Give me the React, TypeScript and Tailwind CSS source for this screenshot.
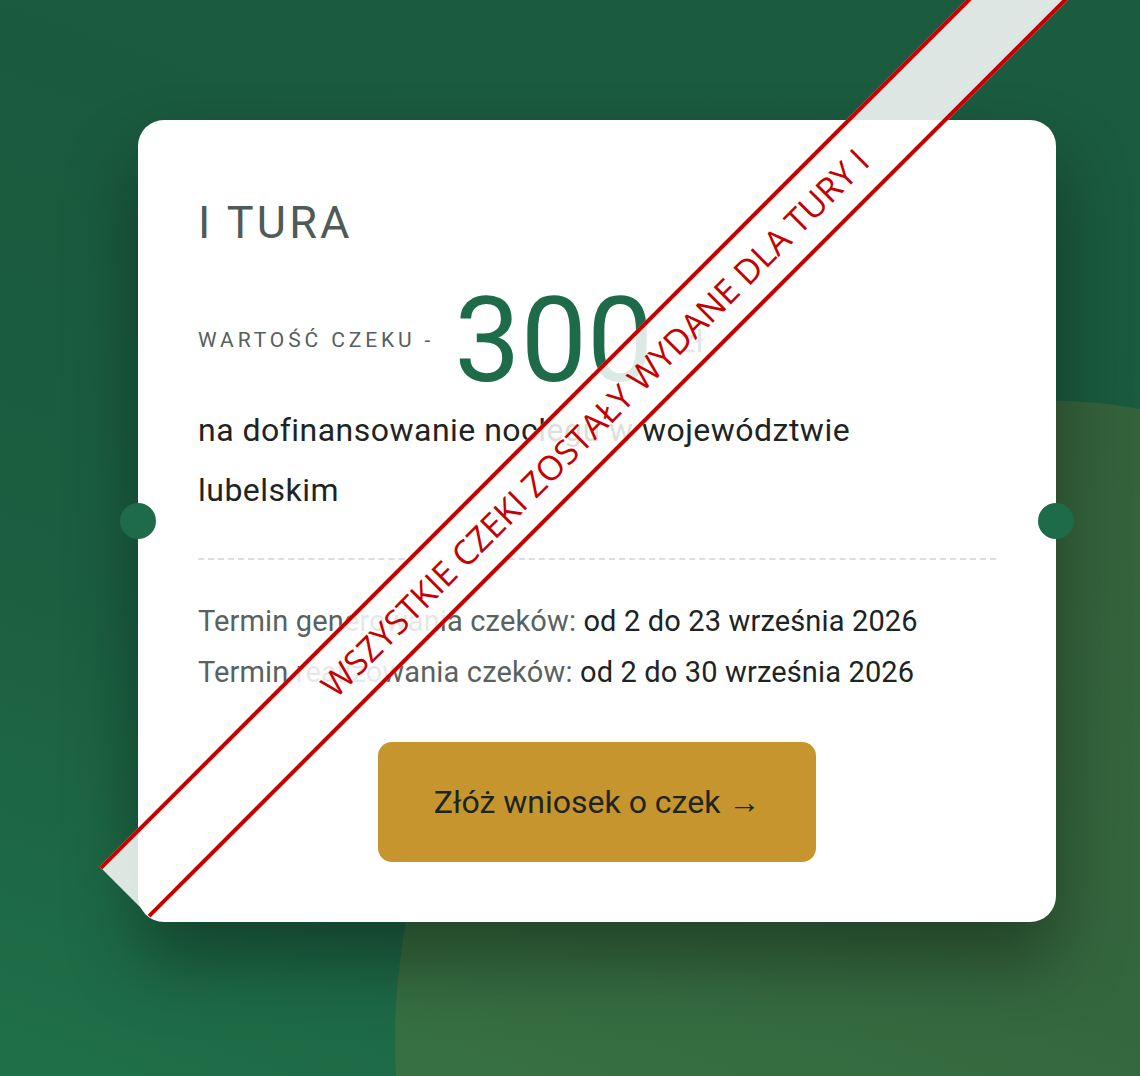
import React from "react";

const sans = { fontFamily: "Roboto, 'Noto Sans', sans-serif" };

function Notch({ side }: { side: "left" | "right" }) {
  return (
    <span
      className={`absolute top-1/2 h-9 w-9 -translate-y-1/2 rounded-full bg-[#1e6b49] ${
        side === "left" ? "-left-[18px]" : "-right-[18px]"
      }`}
    />
  );
}

function Ribbon() {
  return (
    <div className="pointer-events-none absolute left-[125px] top-[856px] z-20 flex h-[72px] w-[1500px] origin-[0_50%] -rotate-45 items-center border-y-4 border-[#c40000] bg-white/85">
      <span
        className="ml-[664px] -translate-x-1/2 whitespace-nowrap text-[34px] leading-none text-[#c40000]"
        style={{ fontFamily: "'Open Sans', sans-serif" }}
      >
        WSZYSTKIE CZEKI ZOSTAŁY WYDANE DLA TURY I
      </span>
    </div>
  );
}

function Term({ label, value }: { label: string; value: string }) {
  return (
    <p>
      <span className="text-[#59625f]">{label} </span>
      <span className="text-[#1d2422]">{value}</span>
    </p>
  );
}

export default function App() {
  return (
    <div
      className="relative h-[1076px] w-full overflow-hidden bg-[linear-gradient(20deg,#1f7049_0%,#1b5e40_35%,#1a5a3e_70%,#1b5b3e_100%)]"
      style={sans}
    >
      {/* soft round glow bottom right */}
      <div className="absolute left-[395px] top-[400px] h-[1280px] w-[1280px] rounded-full bg-[#c7952e]/15" />

      <div className="relative z-10 pl-[138px] pt-[120px]">
        <div className="relative flex w-[918px] flex-col rounded-[26px] bg-white px-[60px] pb-[60px] pt-[80px] shadow-[0_40px_70px_rgba(0,0,0,0.35)]">
          <Notch side="left" />
          <Notch side="right" />

          <h2 className="text-[45px] leading-none tracking-[0.07em] text-[#4e5b57]">I TURA</h2>

          <div className="mt-[37px] flex items-center">
            <span className="text-[21px] tracking-[0.185em] text-[#56605d]">WARTOŚĆ CZEKU -</span>
            <span className="ml-[20px] text-[118px] leading-none text-[#1e6b49]">300</span>
            <span className="ml-[26px] text-[32px] leading-none text-[#1e6b49]">zł</span>
          </div>

          <p className="max-w-[700px] text-[32px] leading-[60px] tracking-[0.015em] text-[#1d2422]">
            na dofinansowanie noclegu w województwie lubelskim
          </p>

          <div className="mt-[38px] border-t-2 border-dashed border-[#dedede]" />

          <div className="mt-[36px] text-[29px] leading-[51px] tracking-[0.005em]">
            <Term label="Termin generowania czeków:" value="od 2 do 23 września 2026" />
            <Term label="Termin realizowania czeków:" value="od 2 do 30 września 2026" />
          </div>

          <button className="mt-[44px] h-[120px] w-[438px] self-center rounded-[14px] bg-[#c7952e] text-[32px] text-[#1d2422]">
            Złóż wniosek o czek →
          </button>
        </div>
      </div>

      <Ribbon />
    </div>
  );
}
